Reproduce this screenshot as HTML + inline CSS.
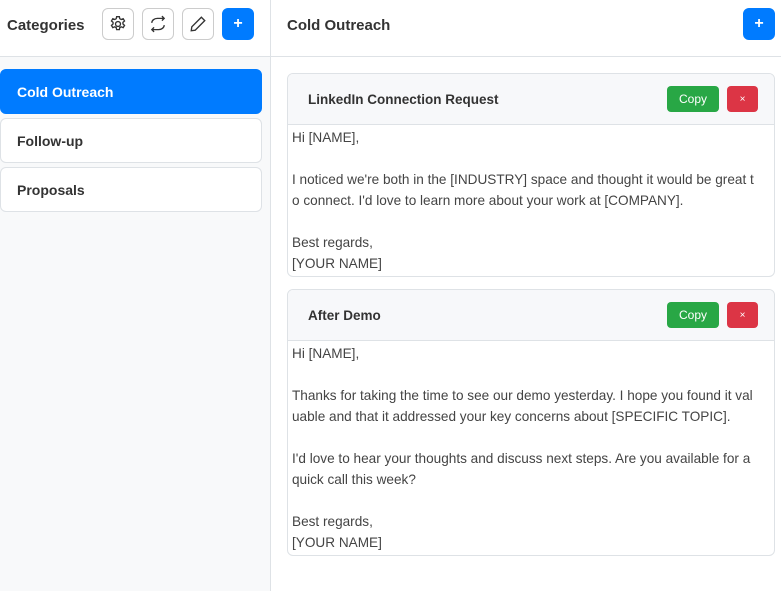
<!DOCTYPE html><html><head><style>
*{box-sizing:border-box;margin:0;padding:0}
body{width:781px;height:591px;font-family:"Liberation Sans",sans-serif;color:#333;background:#fff;position:relative;overflow:hidden}
.side{position:absolute;left:0;top:0;width:271px;height:591px;border-right:1px solid #dee2e6;background:#f8f9fa}
.sh{height:57px;background:#fff;border-bottom:1px solid #dee2e6;position:relative}
.sh h2{position:absolute;left:7px;top:17px;font-size:15px;font-weight:600;color:#333}
.ib{position:absolute;top:8px;width:32px;height:32px;border:1px solid #ccc;border-radius:6px;background:#fff;display:flex;align-items:center;justify-content:center}
.pb{background:#007bff;border-color:#007bff;color:#fff;font-weight:bold;font-size:16px}
.it{position:absolute;left:0;width:262px;border:1px solid #dee2e6;border-radius:6px;background:#fff;font-size:14px;font-weight:bold;padding-left:16px;display:flex;align-items:center;color:#333}
.it.a{background:#007bff;border-color:#007bff;color:#fff}
.mh{position:absolute;left:271px;top:0;right:0;height:57px;border-bottom:1px solid #dee2e6}
.mh h2{position:absolute;left:16px;top:17px;font-size:15px;font-weight:600}
.card{position:absolute;left:287px;width:488px;border:1px solid #dee2e6;border-radius:6px;overflow:hidden}
.ch{height:51px;background:#f7f8fa;border-bottom:1px solid #dee2e6;position:relative}
.ch b{position:absolute;left:20px;top:18px;font-size:13.5px}
.cp{position:absolute;left:379px;top:12px;width:52px;height:26px;background:#28a745;color:#fff;border-radius:4px;font-size:12px;display:flex;align-items:center;justify-content:center}
.x{position:absolute;left:439px;top:12px;width:31px;height:26px;background:#dc3545;color:#fff;border-radius:4px;font-size:10px;display:flex;align-items:center;justify-content:center}
.bd{padding:2px 4px;font-size:13.6px;line-height:21px;color:#444;white-space:pre}
</style></head><body>
<div class="side">
<div class="sh"><h2>Categories</h2>
<div class="ib" style="left:102px"><svg width="18" height="18" viewBox="0 0 16 16" fill="none" stroke="#333" stroke-width="1.2"><path d="M6.8 1.5h2.4l.4 1.8 1.3.7 1.7-.7 1.2 2-1.4 1.2v1.5l1.4 1.2-1.2 2-1.7-.7-1.3.7-.4 1.8H6.8l-.4-1.8-1.3-.7-1.7.7-1.2-2 1.4-1.2V6.5L2.2 5.3l1.2-2 1.7.7 1.3-.7z"/><circle cx="8" cy="8" r="2.2"/></svg></div>
<div class="ib" style="left:142px"><svg width="18" height="18" viewBox="0 0 16 16" fill="none" stroke="#333" stroke-width="1.2"><path d="M2.5 7A5 4 0 0 1 7.5 3h6M11.5 1l2 2-2 2M13.5 9a5 4 0 0 1-5 4h-6M4.5 15l-2-2 2-2"/></svg></div>
<div class="ib" style="left:182px"><svg width="18" height="18" viewBox="0 0 16 16" fill="none" stroke="#333" stroke-width="1.2"><path d="M11 2l3 3-8.5 8.5L2 14l.5-3.5z"/></svg></div>
<div class="ib pb" style="left:222px">+</div>
</div>
<div class="it a" style="top:69px;height:45px">Cold Outreach</div>
<div class="it" style="top:118px;height:45px">Follow-up</div>
<div class="it" style="top:167px;height:45px">Proposals</div>
</div>
<div class="mh"><h2>Cold Outreach</h2><div class="ib pb" style="left:472px;top:8px">+</div></div>
<div class="card" style="top:73px;height:204px"><div class="ch"><b>LinkedIn Connection Request</b><div class="cp">Copy</div><div class="x">×</div></div>
<div class="bd">Hi [NAME],

I noticed we're both in the [INDUSTRY] space and thought it would be great t
o connect. I'd love to learn more about your work at [COMPANY].

Best regards,
[YOUR NAME]</div></div>
<div class="card" style="top:289px;height:267px"><div class="ch"><b>After Demo</b><div class="cp">Copy</div><div class="x">×</div></div>
<div class="bd">Hi [NAME],

Thanks for taking the time to see our demo yesterday. I hope you found it val
uable and that it addressed your key concerns about [SPECIFIC TOPIC].

I'd love to hear your thoughts and discuss next steps. Are you available for a
quick call this week?

Best regards,
[YOUR NAME]</div></div>
</body></html>
